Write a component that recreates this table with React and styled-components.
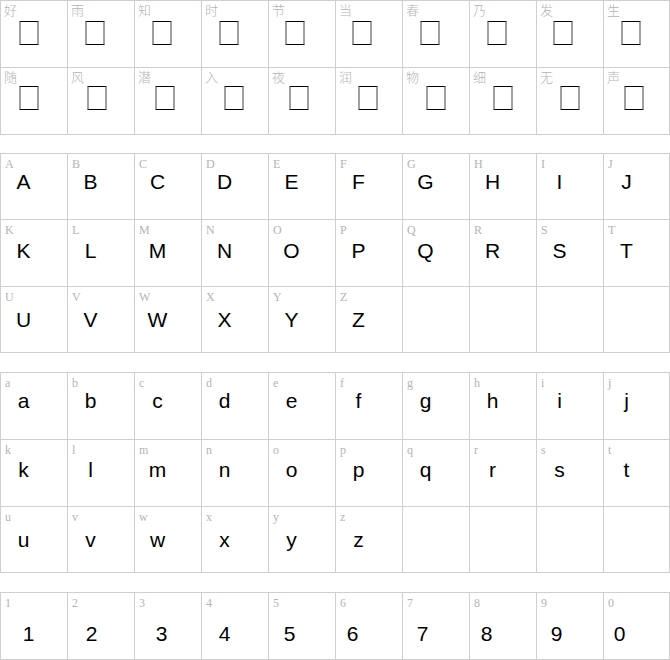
import React from "react";
import styled, { createGlobalStyle } from "styled-components";

const Global = createGlobalStyle`
  html, body { margin: 0; padding: 0; background: #fff; }
  body { font-family: "Liberation Sans", Arial, sans-serif; }
`;

const Page = styled.div`
  width: 670px;
  display: flex;
  flex-direction: column;
`;

const Table = styled.div`
  display: grid;
  grid-template-columns: repeat(9, 67px) 66px;
  grid-template-rows: ${(p) => p.$rows.map((r) => `${r}px`).join(" ")};
  border-top: 1px solid #cfcfcf;
  border-left: 1px solid #cfcfcf;
  margin-top: ${(p) => p.$gap}px;
  width: 670px;
  box-sizing: border-box;
`;

const Cell = styled.div`
  box-sizing: border-box;
  border-right: 1px solid #cfcfcf;
  border-bottom: 1px solid #cfcfcf;
  display: flex;
  flex-direction: column;
  align-items: flex-start;
  overflow: hidden;
`;

const Label = styled.span`
  display: block;
  padding: ${(p) => (p.$cjk ? "2px 0 0 3px" : "3px 0 0 4px")};
  font-family: ${(p) =>
    p.$cjk
      ? '"Noto Sans CJK SC", "Noto Sans CJK JP", sans-serif'
      : '"Liberation Serif", "DejaVu Serif", serif'};
  font-size: ${(p) => (p.$cjk ? "13px" : "12px")};
  line-height: 14px;
  color: #b4b4b4;
  font-weight: 300;
`;

const Glyph = styled.span`
  display: block;
  width: 45px;
  text-align: center;
  margin-top: ${(p) => p.$top}px;
  margin-left: ${(p) => p.$dx || 0}px;
  font-family: "Liberation Sans", Arial, sans-serif;
  font-size: 21px;
  line-height: 20px;
  color: #000;
`;

const Tofu = styled.span`
  display: block;
  box-sizing: border-box;
  width: 20px;
  height: 24px;
  margin-top: ${(p) => p.$top}px;
  margin-left: ${(p) => p.$dx}px;
  border-top: 1px solid #000;
  border-bottom: 1px solid #000;
  border-left: 2px solid #a0a0a0;
  border-right: 2px solid #a0a0a0;
`;

const cjk = [
  { chars: "好雨知时节当春乃发生", dx: [18, 17, 17, 17, 16, 16, 17, 17, 16, 17], top: 4 },
  { chars: "随风潜入夜润物细无声", dx: [18, 19, 20, 22, 20, 22, 23, 23, 23, 20], top: 2 },
];

const upper = ["ABCDEFGHIJ", "KLMNOPQRST", "UVWXYZ"];
const lower = ["abcdefghij", "klmnopqrst", "uvwxyz"];
const digits = "1234567890";
const digitDx = [5, 1, 4, 0, -2, -6, -3, -6, -3, -7];

function pad(arr) {
  const out = [...arr];
  while (out.length < 10) out.push(null);
  return out;
}

function LetterTable({ rows, heights, tops, gap }) {
  return (
    <Table $rows={heights} $gap={gap}>
      {rows.flatMap((row, r) =>
        pad(row.split("")).map((ch, i) => (
          <Cell key={`${r}-${i}`}>
            {ch && (
              <>
                <Label>{ch}</Label>
                <Glyph $top={tops[r]}>{ch}</Glyph>
              </>
            )}
          </Cell>
        ))
      )}
    </Table>
  );
}

export default function App() {
  return (
    <>
      <Global />
      <Page>
        <Table $rows={[67, 67]} $gap={0}>
          {cjk.flatMap((row, r) =>
            row.chars.split("").map((ch, i) => (
              <Cell key={`c${r}-${i}`}>
                <Label $cjk>{ch}</Label>
                <Tofu $top={row.top} $dx={row.dx[i]} />
              </Cell>
            ))
          )}
        </Table>
        <LetterTable rows={upper} heights={[66, 67, 66]} tops={[1, 4, 6]} gap={18} />
        <LetterTable rows={lower} heights={[67, 67, 66]} tops={[1, 3, 6]} gap={19} />
        <Table $rows={[67]} $gap={19}>
          {digits.split("").map((d, i) => (
            <Cell key={`d${i}`}>
              <Label>{d}</Label>
              <Glyph $top={14} $dx={digitDx[i]}>
                {d}
              </Glyph>
            </Cell>
          ))}
        </Table>
      </Page>
    </>
  );
}
